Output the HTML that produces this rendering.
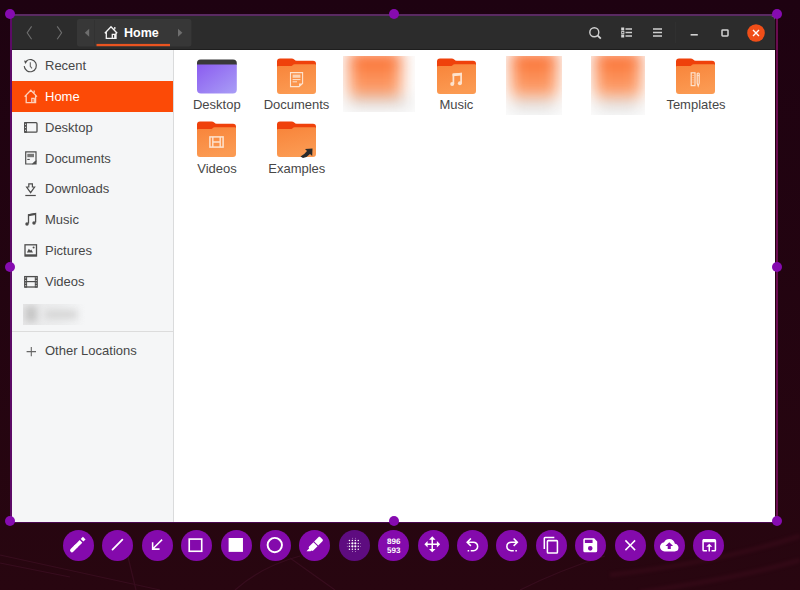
<!DOCTYPE html><html><head><meta charset="utf-8"><style>
*{box-sizing:border-box;margin:0;padding:0}
html,body{width:800px;height:590px;overflow:hidden;background:linear-gradient(#1e0211,#280610);font-family:"Liberation Sans",sans-serif}
.a{position:absolute}
.t{position:absolute;font-size:13px;line-height:15px;color:#474747;white-space:nowrap}
</style></head><body>
<svg class="a" style="left:0;top:0" width="800" height="590"><g fill="none" stroke="#3c0f22" stroke-width="1.2" opacity="0.75" style="filter:blur(0.5px)"><path d="M0 555 L160 590"/><path d="M0 563 L70 577"/><path d="M128 557 L136 590"/><path d="M235 590 Q262 566 300 556"/><path d="M290 558 L335 590"/><path d="M520 590 Q560 570 605 556"/></g><g fill="none" stroke="#3a0b1a" stroke-width="5" opacity="0.55" style="filter:blur(1.5px)"><path d="M610 575 Q720 562 800 536"/><path d="M640 592 Q740 578 800 560"/></g></svg>
<div class="a" style="left:12px;top:16px;width:763px;height:506px;background:#fff"></div>
<div class="a" style="left:12px;top:16px;width:763px;height:33px;background:#2c2c2c;border-top-right-radius:4px"></div>
<div class="a" style="left:12px;top:49px;width:763px;height:1px;background:#1e1e1e"></div>
<svg class="a" style="left:0;top:0" width="800" height="60"><path d="M31.6 26.4 L27.2 32.8 L31.6 39.2" fill="none" stroke="#6f6f6f" stroke-width="1.1"/><path d="M57.2 26.4 L61.6 32.8 L57.2 39.2" fill="none" stroke="#6f6f6f" stroke-width="1.1"/><rect x="77" y="19" width="114.4" height="27.4" rx="2.5" fill="#373737"/><path d="M94.5 20 V45.5" stroke="#323232" stroke-width="1"/><path d="M89.2 28.8 L84.8 32.8 L89.2 36.8 Z" fill="#6e6e6e"/><path d="M178 28.8 L182.4 32.8 L178 36.8 Z" fill="#6e6e6e"/><rect x="96.5" y="43.9" width="73.5" height="2.3" fill="#ea5420"/><path d="M104.8 33.2 L111 26.8 L117.2 33.2 M106.3 31.8 V38.3 H116 V31.8 M112.3 38.3 V34.3 H114.8 V38.3 M114.8 29.3 V27" fill="none" stroke="#f4f4f4" stroke-width="1.3"/><circle cx="594.3" cy="32.2" r="4.5" fill="none" stroke="#d0d0d0" stroke-width="1.4"/><path d="M597.5 35.3 L600.8 38.6" stroke="#d6d6d6" stroke-width="1.8"/><rect x="621.2" y="27.5" width="3" height="3" fill="#d6d6d6"/><rect x="621.7" y="31.5" width="2.2" height="2.2" fill="none" stroke="#d6d6d6" stroke-width="0.9"/><rect x="621.2" y="34.5" width="3" height="3" fill="#d6d6d6"/><path d="M625.5 29 H632 M625.5 32.5 H632 M625.5 36 H632" stroke="#cfcfcf" stroke-width="1.3"/><path d="M653 29 H662 M653 32.5 H662 M653 36 H662" stroke="#cfcfcf" stroke-width="1.3"/><path d="M675.5 22 V43" stroke="#303030" stroke-width="1"/><path d="M690.6 34.8 H697.8" stroke="#d2d2d2" stroke-width="1.6"/><rect x="722" y="29.9" width="6" height="6" rx="0.6" fill="none" stroke="#d2d2d2" stroke-width="1.5"/><circle cx="756" cy="33" r="8.8" fill="#f04e18"/><path d="M753 30 L759 36 M759 30 L753 36" stroke="#fff" stroke-width="1.4"/></svg>
<div class="a" style="left:124px;top:25.8px;font-size:12.5px;line-height:15px;font-weight:bold;color:#fff">Home</div>
<div class="a" style="left:12px;top:50px;width:161px;height:472px;background:#f5f6f7"></div>
<div class="a" style="left:173px;top:50px;width:1px;height:472px;background:#dadbdc"></div>
<div class="a" style="left:12px;top:81px;width:161px;height:30.5px;background:#fc4a06"></div>
<div class="a" style="left:12px;top:331px;width:161px;height:1px;background:#dcdcdc"></div>
<div class="t" style="left:45px;top:58.1px;color:#474747">Recent</div>
<div class="t" style="left:45px;top:88.9px;color:#ffffff">Home</div>
<div class="t" style="left:45px;top:119.7px;color:#474747">Desktop</div>
<div class="t" style="left:45px;top:150.5px;color:#474747">Documents</div>
<div class="t" style="left:45px;top:181.3px;color:#474747">Downloads</div>
<div class="t" style="left:45px;top:212.1px;color:#474747">Music</div>
<div class="t" style="left:45px;top:242.9px;color:#474747">Pictures</div>
<div class="t" style="left:45px;top:273.7px;color:#474747">Videos</div>
<div class="t" style="left:45px;top:343.4px">Other Locations</div>
<svg class="a" style="left:0;top:0" width="180" height="370"><path d="M24.22 66.13 A6.1 6.1 0 1 0 26.38 60.93" fill="none" stroke="#4e4e4e" stroke-width="1.2"/><path d="M24.1 60.5 L27.4 61.2 L25.2 63.9 Z" fill="#4e4e4e"/><path d="M30.3 62.2 V66.4 L32 68.3" fill="none" stroke="#666" stroke-width="1.1"/><path d="M24.6 96.6 L30.8 90.2 L37 96.6 M26.2 95.2 V102.6 H35.6 V95.2 M31.8 102.6 V98.4 H34.2 V102.6 M34.2 92.8 V90.6" fill="none" stroke="#fdd0bb" stroke-width="1.3"/><rect x="24.7" y="122.7" width="12.3" height="9.5" rx="1" fill="none" stroke="#4e4e4e" stroke-width="1.3"/><rect x="24.1" y="122.1" width="2.8" height="10.7" fill="#4e4e4e"/><path d="M25.5 123.8 V131.6" stroke="#f5f6f7" stroke-width="1" stroke-dasharray="1 2"/><path d="M25.7 151.8 H36 V160.9 L32.7 164 H25.7 Z" fill="none" stroke="#4e4e4e" stroke-width="1.2"/><path d="M32.2 164.6 L36.6 160.3 V164.6 Z" fill="#4e4e4e"/><rect x="27.3" y="153.8" width="6.7" height="3.4" fill="#777"/><rect x="27.3" y="158.9" width="2.4" height="1.1" fill="#4e4e4e"/><path d="M28.8 183.8 H32.4 V187 H34.6 L30.6 192.6 L26.6 187 H28.8 Z" fill="none" stroke="#4e4e4e" stroke-width="1.2" stroke-linejoin="miter"/><path d="M25.3 195.5 H35.8" stroke="#4e4e4e" stroke-width="1.2"/><path d="M28.5 223.6 V214.8 L35.6 213.6 V222.6" fill="none" stroke="#4e4e4e" stroke-width="1.3"/><path d="M28.5 214.2 L35.6 213 V215 L28.5 216.2 Z" fill="#4e4e4e"/><circle cx="27" cy="223.9" r="1.75" fill="#4e4e4e"/><circle cx="34" cy="222.9" r="1.75" fill="#4e4e4e"/><rect x="25" y="244.8" width="11.5" height="11.2" fill="none" stroke="#4e4e4e" stroke-width="1.3"/><rect x="25" y="254.3" width="11.5" height="1.9" fill="#4e4e4e"/><path d="M26.9 252.6 L28.8 248.8 L30.4 250.4 L31.2 249.6 L33 252.6 Z" fill="#4e4e4e"/><circle cx="33.6" cy="247.6" r="1" fill="#4e4e4e"/><rect x="24.9" y="276.6" width="12.1" height="10.4" fill="none" stroke="#4e4e4e" stroke-width="1.3"/><rect x="24.3" y="276" width="2.8" height="11.6" fill="#4e4e4e"/><rect x="34.8" y="276" width="2.8" height="11.6" fill="#4e4e4e"/><path d="M25.7 277.4 V286.6 M36.2 277.4 V286.6" stroke="#f5f6f7" stroke-width="0.9" stroke-dasharray="1 1.6"/><path d="M27 281.6 H35" stroke="#4e4e4e" stroke-width="1.2"/><path d="M26.6 351.6 H36 M31.3 346.9 V356.3" stroke="#666" stroke-width="1.1"/></svg>
<div class="a" style="left:22.5px;top:303.5px;width:63px;height:21px;overflow:hidden;background:linear-gradient(90deg,#e8e8e9,#eeeff0 60%,#f5f6f7)"><div class="a" style="left:0;top:0;width:63px;height:21px;filter:blur(3.5px)"><div class="a" style="left:2px;top:2px;width:12px;height:16px;background:#c6c6c6;border-radius:2px"></div><div class="a" style="left:22px;top:6px;width:32px;height:9px;background:#d6d6d6"></div></div></div>
<svg class="a" style="left:197px;top:59px" width="40" height="35" viewBox="0 0 40 35"><defs><linearGradient id="dg" x1="0" y1="0" x2="1" y2="1"><stop offset="0" stop-color="#8b5cf0"/><stop offset="1" stop-color="#a99ef6"/></linearGradient></defs><path d="M0 4 Q0 0.4 3.6 0.4 H36 Q39.8 0.4 39.8 4 V6 H0 Z" fill="#393939"/><path d="M0 5.6 H39.8 V30.6 Q39.8 34.6 35.8 34.6 H4 Q0 34.6 0 30.6 Z" fill="url(#dg)"/></svg>
<svg class="a" style="left:277px;top:57.6px" width="40" height="37" viewBox="0 0 40 37"><defs><linearGradient id="d1g" x1="0" y1="0" x2="0.3" y2="1"><stop offset="0" stop-color="#f8843a"/><stop offset="1" stop-color="#fb9a52"/></linearGradient></defs><path d="M0 3.4 Q0 0.4 3 0.4 H14.6 Q16.2 0.4 17.2 1.6 Q18.2 2.8 19.8 2.8 H36 Q39 2.8 39 5.8 V14 H0 Z" fill="#ef410b"/><path d="M0 9 Q0 8 1 8 H14.2 C15.6 8 16 6.3 17.6 6.3 H38 Q39 6.3 39 7.3 V33 Q39 36 36 36 H3 Q0 36 0 33 Z" fill="url(#d1g)"/><path d="M13.5 14.6 H25.6 V25.6 L22 28.6 H13.5 Z" fill="none" stroke="#fde3cf" stroke-width="1.1"/><path d="M22 28.6 V25.6 H25.6 Z" fill="#fde3cf"/><rect x="15.6" y="16.6" width="7.8" height="3.2" fill="#fde3cf" opacity="0.8"/><path d="M15.6 21.6 H23.4 M15.6 23.8 H20" stroke="#fde3cf" stroke-width="1"/></svg>
<svg class="a" style="left:437px;top:57.6px" width="40" height="37" viewBox="0 0 40 37"><defs><linearGradient id="m1g" x1="0" y1="0" x2="0.3" y2="1"><stop offset="0" stop-color="#f8843a"/><stop offset="1" stop-color="#fb9a52"/></linearGradient></defs><path d="M0 3.4 Q0 0.4 3 0.4 H14.6 Q16.2 0.4 17.2 1.6 Q18.2 2.8 19.8 2.8 H36 Q39 2.8 39 5.8 V14 H0 Z" fill="#ef410b"/><path d="M0 9 Q0 8 1 8 H14.2 C15.6 8 16 6.3 17.6 6.3 H38 Q39 6.3 39 7.3 V33 Q39 36 36 36 H3 Q0 36 0 33 Z" fill="url(#m1g)"/><path d="M16.4 26 V16.6 L24.1 15.8 V25.2" fill="none" stroke="#fde3cf" stroke-width="1.7"/><path d="M15.6 15.6 L24.9 14.8 V17.4 L15.6 18.2 Z" fill="#fde3cf"/><circle cx="15.2" cy="26.1" r="2" fill="#fde3cf"/><circle cx="22.9" cy="25.3" r="2" fill="#fde3cf"/></svg>
<svg class="a" style="left:676px;top:57.6px" width="40" height="37" viewBox="0 0 40 37"><defs><linearGradient id="t1g" x1="0" y1="0" x2="0.3" y2="1"><stop offset="0" stop-color="#f8843a"/><stop offset="1" stop-color="#fb9a52"/></linearGradient></defs><path d="M0 3.4 Q0 0.4 3 0.4 H14.6 Q16.2 0.4 17.2 1.6 Q18.2 2.8 19.8 2.8 H36 Q39 2.8 39 5.8 V14 H0 Z" fill="#ef410b"/><path d="M0 9 Q0 8 1 8 H14.2 C15.6 8 16 6.3 17.6 6.3 H38 Q39 6.3 39 7.3 V33 Q39 36 36 36 H3 Q0 36 0 33 Z" fill="url(#t1g)"/><rect x="15.2" y="14.8" width="3.8" height="12.8" fill="none" stroke="#fde3cf" stroke-width="1.2"/><path d="M17.1 17 V25.4" stroke="#fde3cf" stroke-width="0.8" stroke-dasharray="1 1.2"/><path d="M21.2 15.6 Q22.2 14.4 23.2 15.6 V25.2 L22.2 28 L21.2 25.2 Z" fill="none" stroke="#fde3cf" stroke-width="1.2"/><path d="M21.2 17.6 H23.2" stroke="#fde3cf" stroke-width="1"/></svg>
<svg class="a" style="left:197.2px;top:121px" width="40" height="37" viewBox="0 0 40 37"><defs><linearGradient id="v1g" x1="0" y1="0" x2="0.3" y2="1"><stop offset="0" stop-color="#f8843a"/><stop offset="1" stop-color="#fb9a52"/></linearGradient></defs><path d="M0 3.4 Q0 0.4 3 0.4 H14.6 Q16.2 0.4 17.2 1.6 Q18.2 2.8 19.8 2.8 H36 Q39 2.8 39 5.8 V14 H0 Z" fill="#ef410b"/><path d="M0 9 Q0 8 1 8 H14.2 C15.6 8 16 6.3 17.6 6.3 H38 Q39 6.3 39 7.3 V33 Q39 36 36 36 H3 Q0 36 0 33 Z" fill="url(#v1g)"/><rect x="12.9" y="15.9" width="13.2" height="10.2" fill="none" stroke="#fde3cf" stroke-width="1.5"/><path d="M15.8 15.9 V26.1 M23.2 15.9 V26.1 M15.8 21 H23.2" stroke="#fde3cf" stroke-width="1.4"/></svg>
<svg class="a" style="left:277px;top:121px" width="40" height="37" viewBox="0 0 40 37"><defs><linearGradient id="e1g" x1="0" y1="0" x2="0.3" y2="1"><stop offset="0" stop-color="#f8843a"/><stop offset="1" stop-color="#fb9a52"/></linearGradient></defs><path d="M0 3.4 Q0 0.4 3 0.4 H14.6 Q16.2 0.4 17.2 1.6 Q18.2 2.8 19.8 2.8 H36 Q39 2.8 39 5.8 V14 H0 Z" fill="#ef410b"/><path d="M0 9 Q0 8 1 8 H14.2 C15.6 8 16 6.3 17.6 6.3 H38 Q39 6.3 39 7.3 V33 Q39 36 36 36 H3 Q0 36 0 33 Z" fill="url(#e1g)"/><path d="M23.5 35.5 Q27 34 30 30 L28 28 L35.5 27.5 L35.2 35 L33 33 Q30 36.5 26 37 Z" fill="#2a2a2a"/></svg>
<div class="a" style="left:343px;top:56px;width:72px;height:56px;overflow:hidden;background:#fcfcfc"><div class="a" style="left:0;top:0;width:72px;height:56px;filter:blur(7.5px)"><div class="a" style="left:6.0px;top:-4px;width:52px;height:45px;background:linear-gradient(#fb7636,#fca372);border-radius:4px"></div><div class="a" style="left:6.0px;top:-2px;width:52px;height:9px;background:#fa6a2c;border-radius:3px"></div><div class="a" style="left:6px;top:42px;width:60px;height:9px;background:#d8d8d8"></div></div></div>
<div class="a" style="left:506px;top:56px;width:56px;height:59px;overflow:hidden;background:#fcfcfc"><div class="a" style="left:0;top:0;width:56px;height:59px;filter:blur(7.5px)"><div class="a" style="left:5.0px;top:-4px;width:46px;height:45px;background:linear-gradient(#fb7636,#fca372);border-radius:4px"></div><div class="a" style="left:5.0px;top:-2px;width:46px;height:9px;background:#fa6a2c;border-radius:3px"></div><div class="a" style="left:6px;top:45px;width:44px;height:9px;background:#d8d8d8"></div></div></div>
<div class="a" style="left:591px;top:56px;width:54px;height:59px;overflow:hidden;background:#fcfcfc"><div class="a" style="left:0;top:0;width:54px;height:59px;filter:blur(7.5px)"><div class="a" style="left:4.0px;top:-4px;width:46px;height:45px;background:linear-gradient(#fb7636,#fca372);border-radius:4px"></div><div class="a" style="left:4.0px;top:-2px;width:46px;height:9px;background:#fa6a2c;border-radius:3px"></div><div class="a" style="left:6px;top:45px;width:42px;height:9px;background:#d8d8d8"></div></div></div>
<div class="t" style="left:166.8px;width:100px;text-align:center;top:96.8px">Desktop</div>
<div class="t" style="left:246.5px;width:100px;text-align:center;top:96.8px">Documents</div>
<div class="t" style="left:406.4px;width:100px;text-align:center;top:96.8px">Music</div>
<div class="t" style="left:646px;width:100px;text-align:center;top:96.8px">Templates</div>
<div class="t" style="left:167px;width:100px;text-align:center;top:160.6px">Videos</div>
<div class="t" style="left:246.8px;width:100px;text-align:center;top:160.6px">Examples</div>
<div class="a" style="left:10px;top:14px;width:2px;height:508px;background:#5c0a66"></div>
<div class="a" style="left:775.5px;top:14px;width:2.5px;height:508px;background:#6a0c50"></div>
<div class="a" style="left:10px;top:521.5px;width:768px;height:1px;background:#4a0850"></div>
<div class="a" style="left:10px;top:14px;width:768px;height:2px;background:#5a2a62"></div>
<div class="a" style="left:5px;top:9px;width:10px;height:10px;border-radius:50%;background:#860bb0"></div>
<div class="a" style="left:389px;top:9px;width:10px;height:10px;border-radius:50%;background:#860bb0"></div>
<div class="a" style="left:772px;top:9px;width:10px;height:10px;border-radius:50%;background:#860bb0"></div>
<div class="a" style="left:5px;top:262px;width:10px;height:10px;border-radius:50%;background:#860bb0"></div>
<div class="a" style="left:772px;top:262px;width:10px;height:10px;border-radius:50%;background:#860bb0"></div>
<div class="a" style="left:5px;top:516px;width:10px;height:10px;border-radius:50%;background:#860bb0"></div>
<div class="a" style="left:389px;top:516px;width:10px;height:10px;border-radius:50%;background:#860bb0"></div>
<div class="a" style="left:772px;top:516px;width:10px;height:10px;border-radius:50%;background:#860bb0"></div>
<div class="a" style="left:63.0px;top:529.5px;width:31px;height:31px;border-radius:50%;background:#840aac"></div>
<svg class="a" style="left:69.25px;top:535.75px" width="18.5" height="18.5" viewBox="0 0 24 24"><path d="M3.8 18.7 L9 13.5" stroke="#fff" stroke-width="4.8" stroke-linecap="round"/><path d="M8.5 14 L15.6 6.9" stroke="#fff" stroke-width="4.8"/><path d="M16.9 5.6 L19.8 2.7" stroke="#fff" stroke-width="4.8"/></svg>
<div class="a" style="left:102.4px;top:529.5px;width:31px;height:31px;border-radius:50%;background:#840aac"></div>
<svg class="a" style="left:108.65px;top:535.75px" width="18.5" height="18.5" viewBox="0 0 24 24"><path d="M4.55 17.55 L17.35 4.75" stroke="#fff" stroke-width="2.3" stroke-linecap="round"/></svg>
<div class="a" style="left:141.8px;top:529.5px;width:31px;height:31px;border-radius:50%;background:#840aac"></div>
<svg class="a" style="left:148.05px;top:535.75px" width="18.5" height="18.5" viewBox="0 0 24 24"><path d="M19,6.41L17.59,5L7,15.59V9H5V19H15V17H8.41L19,6.41Z" fill="#fff" transform="translate(0,-1)"/></svg>
<div class="a" style="left:181.2px;top:529.5px;width:31px;height:31px;border-radius:50%;background:#840aac"></div>
<svg class="a" style="left:187.45px;top:535.75px" width="18.5" height="18.5" viewBox="0 0 24 24"><rect x="2.9" y="4" width="16.2" height="15.8" fill="none" stroke="#fff" stroke-width="2.1"/></svg>
<div class="a" style="left:220.6px;top:529.5px;width:31px;height:31px;border-radius:50%;background:#840aac"></div>
<svg class="a" style="left:226.85px;top:535.75px" width="18.5" height="18.5" viewBox="0 0 24 24"><rect x="2.1" y="2.6" width="18.6" height="18" fill="#fff"/></svg>
<div class="a" style="left:260.0px;top:529.5px;width:31px;height:31px;border-radius:50%;background:#840aac"></div>
<svg class="a" style="left:266.25px;top:535.75px" width="18.5" height="18.5" viewBox="0 0 24 24"><circle cx="11.4" cy="11.7" r="9.3" fill="none" stroke="#fff" stroke-width="2.5"/></svg>
<div class="a" style="left:299.4px;top:529.5px;width:31px;height:31px;border-radius:50%;background:#840aac"></div>
<svg class="a" style="left:305.9px;top:536.4px" width="17.4" height="17.4" viewBox="0 0 24 24"><path d="M18.5,1.15C17.97,1.15 17.46,1.34 17.07,1.73L11.26,7.55L16.91,13.2L22.73,7.39C23.5,6.61 23.5,5.35 22.73,4.56L19.89,1.73C19.5,1.34 19,1.15 18.5,1.15M10.3,8.5L4.34,14.46C3.56,15.24 3.56,16.5 4.36,17.31C3.14,18.54 1.9,19.77 0.67,21H6.33L7.19,20.14C7.97,20.9 9.22,20.89 10,20.12L15.95,14.16Z" fill="#fff"/></svg>
<div class="a" style="left:338.8px;top:529.5px;width:31px;height:31px;border-radius:50%;background:#5e0c80"></div>
<svg class="a" style="left:344.9px;top:535.5px" width="17.7" height="17.7" viewBox="0 0 24 24"><circle cx="6" cy="6" r="1" fill="#fff"/><circle cx="6" cy="10" r="1" fill="#fff"/><circle cx="6" cy="14" r="1" fill="#fff"/><circle cx="6" cy="18" r="1" fill="#fff"/><circle cx="10" cy="6" r="1" fill="#fff"/><circle cx="10" cy="10" r="1.5" fill="#fff"/><circle cx="10" cy="14" r="1.5" fill="#fff"/><circle cx="10" cy="18" r="1" fill="#fff"/><circle cx="14" cy="6" r="1" fill="#fff"/><circle cx="14" cy="10" r="1.5" fill="#fff"/><circle cx="14" cy="14" r="1.5" fill="#fff"/><circle cx="14" cy="18" r="1" fill="#fff"/><circle cx="18" cy="6" r="1" fill="#fff"/><circle cx="18" cy="10" r="1" fill="#fff"/><circle cx="18" cy="14" r="1" fill="#fff"/><circle cx="18" cy="18" r="1" fill="#fff"/><circle cx="10" cy="3" r="0.55" fill="#fff"/><circle cx="14" cy="3" r="0.55" fill="#fff"/><circle cx="10" cy="21" r="0.55" fill="#fff"/><circle cx="14" cy="21" r="0.55" fill="#fff"/><circle cx="3" cy="10" r="0.55" fill="#fff"/><circle cx="3" cy="14" r="0.55" fill="#fff"/><circle cx="21" cy="10" r="0.55" fill="#fff"/><circle cx="21" cy="14" r="0.55" fill="#fff"/></svg>
<div class="a" style="left:378.2px;top:529.5px;width:31px;height:31px;border-radius:50%;background:#840aac"></div>
<div class="a" style="left:378.7px;top:538px;width:30px;text-align:center;font-size:8px;line-height:8.6px;font-weight:bold;color:#fff;text-rendering:geometricPrecision;-webkit-font-smoothing:antialiased">896<br>593</div>
<div class="a" style="left:417.6px;top:529.5px;width:31px;height:31px;border-radius:50%;background:#840aac"></div>
<svg class="a" style="left:423.25px;top:535.15px" width="18.5" height="18.5" viewBox="0 0 24 24"><path d="M13,6V11H18V7.75L22.25,12L18,16.25V13H13V18H16.25L12,22.25L7.75,18H11V13H6V16.25L1.75,12L6,7.75V11H11V6H7.75L12,1.75L16.25,6H13Z" fill="#fff"/></svg>
<div class="a" style="left:457.0px;top:529.5px;width:31px;height:31px;border-radius:50%;background:#840aac"></div>
<svg class="a" style="left:463.25px;top:535.75px" width="18.5" height="18.5" viewBox="0 0 24 24"><path d="M13.5,7A6.5,6.5 0 0,1 20,13.5A6.5,6.5 0 0,1 13.5,20H10V18H13.5C16,18 18,16 18,13.5C18,11 16,9 13.5,9H7.83L10.91,12.09L9.5,13.5L4,8L9.5,2.5L10.92,3.91L7.83,7H13.5M6,18H8V20H6V18Z" fill="#fff"/></svg>
<div class="a" style="left:496.4px;top:529.5px;width:31px;height:31px;border-radius:50%;background:#840aac"></div>
<svg class="a" style="left:502.65px;top:535.75px" width="18.5" height="18.5" viewBox="0 0 24 24"><path d="M10.5,7A6.5,6.5 0 0,0 4,13.5A6.5,6.5 0 0,0 10.5,20H14V18H10.5C8,18 6,16 6,13.5C6,11 8,9 10.5,9H16.17L13.09,12.09L14.5,13.5L20,8L14.5,2.5L13.08,3.91L16.17,7H10.5M18,18H16V20H18V18Z" fill="#fff"/></svg>
<div class="a" style="left:535.8px;top:529.5px;width:31px;height:31px;border-radius:50%;background:#840aac"></div>
<svg class="a" style="left:542.05px;top:535.75px" width="18.5" height="18.5" viewBox="0 0 24 24"><path d="M19,21H8V7H19M19,5H8A2,2 0 0,0 6,7V21A2,2 0 0,0 8,23H19A2,2 0 0,0 21,21V7A2,2 0 0,0 19,5M16,1H4A2,2 0 0,0 2,3V17H4V3H16V1Z" fill="#fff"/></svg>
<div class="a" style="left:575.2px;top:529.5px;width:31px;height:31px;border-radius:50%;background:#840aac"></div>
<svg class="a" style="left:581.45px;top:535.75px" width="18.5" height="18.5" viewBox="0 0 24 24"><path d="M15,9H5V5H15M12,19A3,3 0 0,1 9,16A3,3 0 0,1 12,13A3,3 0 0,1 15,16A3,3 0 0,1 12,19M17,3H5C3.89,3 3,3.9 3,5V19A2,2 0 0,0 5,21H19A2,2 0 0,0 21,19V7L17,3Z" fill="#fff"/></svg>
<div class="a" style="left:614.6px;top:529.5px;width:31px;height:31px;border-radius:50%;background:#840aac"></div>
<svg class="a" style="left:620.85px;top:535.75px" width="18.5" height="18.5" viewBox="0 0 24 24"><path d="M19,6.41L17.59,5L12,10.59L6.41,5L5,6.41L10.59,12L5,17.59L6.41,19L12,13.41L17.59,19L19,17.59L13.41,12L19,6.41Z" fill="#fff"/></svg>
<div class="a" style="left:654.0px;top:529.5px;width:31px;height:31px;border-radius:50%;background:#840aac"></div>
<svg class="a" style="left:660.25px;top:535.75px" width="18.5" height="18.5" viewBox="0 0 24 24"><path d="M14,13V17H10V13H7L12,8L17,13M19.35,10.03C18.67,6.59 15.64,4 12,4C9.11,4 6.6,5.64 5.35,8.03C2.34,8.36 0,10.9 0,14A6,6 0 0,0 6,20H19A5,5 0 0,0 24,15C24,12.36 21.95,10.22 19.35,10.03Z" fill="#fff"/></svg>
<div class="a" style="left:693.4px;top:529.5px;width:31px;height:31px;border-radius:50%;background:#840aac"></div>
<svg class="a" style="left:699.65px;top:535.75px" width="18.5" height="18.5" viewBox="0 0 24 24"><path d="M12,10L8,14H11V20H13V14H16M19,4H5C3.89,4 3,4.9 3,6V18A2,2 0 0,0 5,20H9V18H5V8H19V18H15V20H19A2,2 0 0,0 21,18V6A2,2 0 0,0 19,4Z" fill="#fff"/></svg>
</body></html>
